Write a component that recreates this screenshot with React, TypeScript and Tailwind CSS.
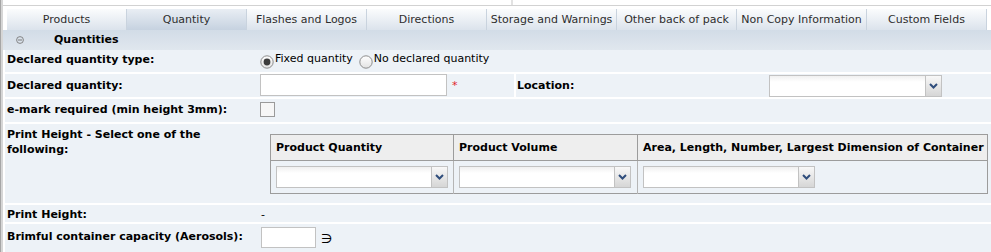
import React from 'react';

const tabs = [
  { label: 'Products', w: 'w-[120px]' },
  { label: 'Quantity', w: 'w-[120px]', active: true },
  { label: 'Flashes and Logos', w: 'w-[120px]' },
  { label: 'Directions', w: 'w-[120px]' },
  { label: 'Storage and Warnings', w: 'w-[130px]' },
  { label: 'Other back of pack', w: 'w-[120px]' },
  { label: 'Non Copy Information', w: 'w-[130px]' },
  { label: 'Custom Fields', w: 'w-[120px]' },
];

function Chevron() {
  return (
    <svg width="9" height="6" viewBox="0 0 9 6" className="mb-[1px]">
      <path d="M1 1 L4.5 4.5 L8 1" fill="none" stroke="#2f4d7c" strokeWidth="2" />
    </svg>
  );
}

function Select({ w }: { w: string }) {
  return (
    <div className={`flex h-[22px] ${w} border border-[#c2c2c2] bg-white`}>
      <div className="flex-1 bg-linear-to-b from-[#f0f0f0] to-white to-[30%]" />
      <div className="flex w-[16px] items-center justify-center border-l border-[#c2c2c2] bg-linear-to-b from-[#f8f8f8] to-[#d6d6d6]">
        <Chevron />
      </div>
    </div>
  );
}

function Radio({ checked }: { checked?: boolean }) {
  return (
    <svg width="14" height="14" viewBox="0 0 14 14" className="mt-[3px] shrink-0">
      <defs>
        <linearGradient id="rg" x1="0" y1="0" x2="0" y2="1">
          <stop offset="0" stopColor="#ffffff" />
          <stop offset="1" stopColor="#e2e2e2" />
        </linearGradient>
      </defs>
      <circle cx="7" cy="7" r="6.2" fill="url(#rg)" stroke="#8c8c8c" strokeWidth="1" />
      {checked && <circle cx="7" cy="7" r="3.4" fill="#3c3c3c" />}
    </svg>
  );
}

function Label({ children, className = '' }: { children: React.ReactNode; className?: string }) {
  return <div className={`w-[255px] shrink-0 pl-[2px] font-bold text-black ${className}`}>{children}</div>;
}

export default function App() {
  return (
    <div className="h-[252px] w-[991px] overflow-hidden bg-white text-[11px] leading-[14px] text-black font-['DejaVu_Sans',Verdana,sans-serif]">
      <div className="flex h-full border-l border-[#a6a6a6]">
        <div className="w-[2px] shrink-0 bg-[#d6d6d6]" />
        <div className="flex min-w-0 flex-1 flex-col">
          {/* top strip */}
          <div className="flex h-[6px] shrink-0 border-b border-[#d2d2d2]">
            <div className="w-[510px] border-r-2 border-[#e2e2e2]" />
            <div className="flex-1" />
          </div>

          {/* tabs */}
          <div className="flex h-[24px] shrink-0 pl-[4px] pt-[3px]">
            {tabs.map((t) => (
              <div
                key={t.label}
                className={`${t.w} flex h-[21px] items-center justify-center whitespace-nowrap border-r border-[#c9d3de] text-[#2e2e2e] ${
                  t.active
                    ? 'bg-linear-to-b from-[#e9eef4] to-[#c6d2e0]'
                    : 'bg-linear-to-b from-[#fbfcfd] to-[#dbe3ec]'
                }`}
              >
                {t.label}
              </div>
            ))}
          </div>

          {/* section header */}
          <div className="flex h-[20px] shrink-0 items-center bg-linear-to-b from-[#d2dce7] to-[#e0e7ee]">
            <svg width="8" height="8" viewBox="0 0 8 8" className="ml-[13px]">
              <circle cx="4" cy="4" r="3.4" fill="none" stroke="#7a7a7a" strokeWidth="0.9" />
              <path d="M2 4 H6" stroke="#7a7a7a" strokeWidth="1" />
            </svg>
            <span className="ml-[30px] font-bold text-black">Quantities</span>
          </div>

          {/* rows */}
          <div className="flex flex-col gap-[2px] pl-[2px]">
            <div className="flex h-[22px] items-start bg-[#edf2f7] pt-[2px]">
              <Label className="pt-[1px]">Declared quantity type:</Label>
              <div className="flex items-start">
                <Radio checked />
                <span className="ml-[1px]">Fixed quantity</span>
                <span className="ml-[6px]" />
                <Radio />
                <span className="ml-[1px]">No declared quantity</span>
              </div>
            </div>

            <div className="flex h-[23px] items-center bg-[#edf2f7]">
              <Label>Declared quantity:</Label>
              <div className="flex h-full w-[254px] items-start">
                <div className="h-[22px] w-[187px] border border-[#c2c2c2] bg-white" />
                <span className="ml-[5px] mt-[5px] text-[#e0242b]">*</span>
              </div>
              <div className="h-full w-[2px] bg-white" />
              <div className="w-[253px] pl-[1px] font-bold text-black">Location:</div>
              <div className="flex h-full items-start pt-[1px]">
                <Select w="w-[173px]" />
              </div>
            </div>

            <div className="flex h-[23px] items-start bg-[#edf2f7] pt-[3px]">
              <Label className="pt-[1px]">e-mark required (min height 3mm):</Label>
              <div className="h-[15px] w-[15px] border border-[#9a9a9a] bg-[#f6f6f6]" />
            </div>

            <div className="flex h-[79px] items-start bg-[#edf2f7]">
              <Label className="pt-[3px] leading-[15px]">Print Height - Select one of the following:</Label>
              <table className="ml-[10px] mt-[10px] w-[718px] border-collapse border border-[#9c9c9c]">
                <thead>
                  <tr className="h-[26px] bg-[#eeeeee]">
                    <th className="w-[183px] border-r border-b border-[#9c9c9c] pl-[5px] text-left font-bold text-black">
                      Product Quantity
                    </th>
                    <th className="w-[184px] border-r border-b border-[#9c9c9c] pl-[5px] text-left font-bold text-black">
                      Product Volume
                    </th>
                    <th className="border-b border-[#9c9c9c] pl-[5px] text-left font-bold text-black">
                      Area, Length, Number, Largest Dimension of Container
                    </th>
                  </tr>
                </thead>
                <tbody>
                  <tr className="h-[33px]">
                    <td className="border-r border-[#b5b5b5] pl-[5px] align-middle">
                      <Select w="w-[172px]" />
                    </td>
                    <td className="border-r border-[#b5b5b5] pl-[5px] align-middle">
                      <Select w="w-[172px]" />
                    </td>
                    <td className="pl-[5px] align-middle">
                      <Select w="w-[172px]" />
                    </td>
                  </tr>
                </tbody>
              </table>
            </div>

            <div className="flex h-[17px] items-start bg-[#edf2f7] pt-[3px]">
              <Label>Print Height:</Label>
              <span className="pl-[1px]">-</span>
            </div>

            <div className="flex h-[30px] items-start bg-[#edf2f7] pt-[3px]">
              <Label className="pt-[3px]">Brimful container capacity (Aerosols):</Label>
              <div className="ml-[1px] h-[21px] w-[55px] border border-[#c2c2c2] bg-white" />
              <span className="ml-[5px] mt-[5px] text-[13px]">∋</span>
            </div>
          </div>
        </div>
      </div>
    </div>
  );
}
